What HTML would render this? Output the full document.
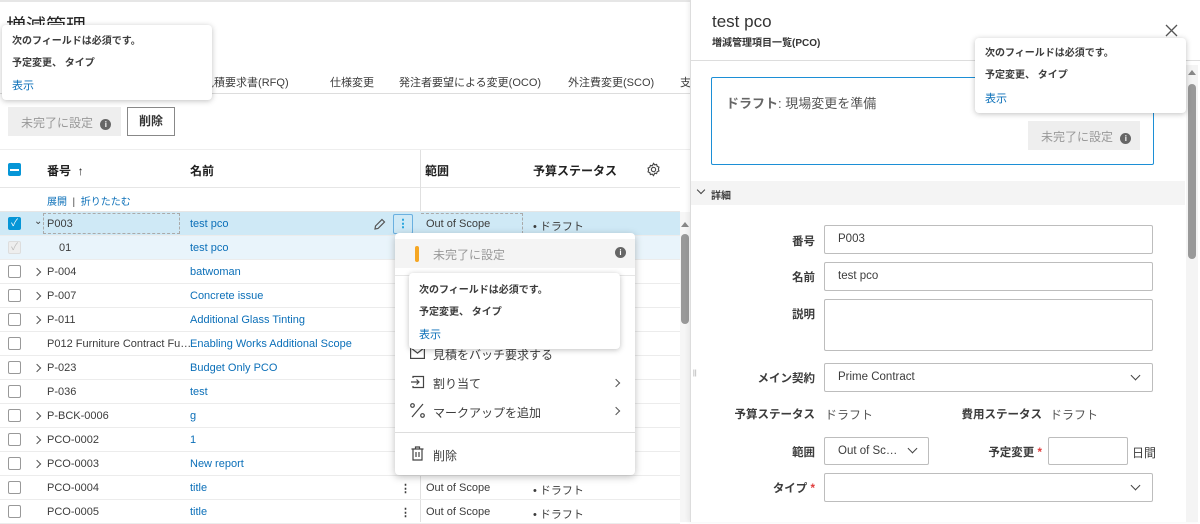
<!DOCTYPE html>
<html><head><meta charset="utf-8"><style>
*{box-sizing:border-box;margin:0;padding:0}
body{width:1200px;height:522px;overflow:hidden;background:#fff;font-family:"Liberation Sans","Noto Sans CJK JP",sans-serif;font-size:11px;color:#3c3c3c;position:relative}
.a{position:absolute;white-space:nowrap}
.row{position:absolute;left:0;width:680px;height:24px;border-bottom:1px solid #ececec}
.row>.a{top:6px}
.cb{position:absolute;left:8px;top:5px;width:13px;height:13px;border:1px solid #999;border-radius:2px;background:#fff}
.lnk{color:#0b6fb8}
.tt{position:absolute;background:#fff;border-radius:4px;box-shadow:0 1px 6px rgba(0,0,0,.25);font-size:10px;font-weight:bold;color:#3c3c3c}
.tt div{position:absolute;left:10px;white-space:nowrap}
.inp{position:absolute;border:1px solid #bdbdbd;background:#fff;border-radius:2px;font-size:11.5px;padding:0 13px;color:#3c3c3c}
.lbl{position:absolute;font-weight:bold;font-size:11.5px;text-align:right;white-space:nowrap}
.chev{position:absolute;width:7px;height:7px;border-right:1.3px solid #444;border-bottom:1.3px solid #444;transform:rotate(45deg)}
.rc{position:absolute;width:6px;height:6px;border-right:1.2px solid #555;border-bottom:1.2px solid #555;transform:rotate(-45deg)}
</style></head><body>
<div class="a" style="left:0;top:0;width:1200px;height:2px;background:#e6e6e6"></div>
<div class="a" style="left:6px;top:10px;font-size:20px;color:#222">増減管理</div>
<div class="a" style="left:200px;top:74px;font-size:11px">/見積要求書(RFQ)</div>
<div class="a" style="left:330px;top:74px;font-size:11px">仕様変更</div>
<div class="a" style="left:399px;top:74px;font-size:11px">発注者要望による変更(OCO)</div>
<div class="a" style="left:568px;top:74px;font-size:11px">外注費変更(SCO)</div>
<div class="a" style="left:680px;top:74px;font-size:11px">支</div>
<div class="a" style="left:0;top:93px;width:690px;height:1px;background:#ddd"></div>
<div class="a" style="left:8px;top:107px;width:113px;height:29px;background:#eee;color:#999;font-size:12px;padding:7px 0 0 13px">未完了に設定 <span style="display:inline-block;width:11px;height:11px;border-radius:50%;background:#666;color:#fff;font-size:8px;text-align:center;line-height:11px;font-weight:bold;margin-left:4px">i</span></div>
<div class="a" style="left:127px;top:107px;width:48px;height:29px;border:1px solid #888;font-weight:bold;font-size:12px;text-align:center;line-height:27px;color:#333">削除</div>
<div class="a" style="left:0;top:149px;width:690px;height:1px;background:#eee"></div>
<div class="a" style="left:8px;top:163px;width:13px;height:13px;background:#0696d7;border-radius:2px"><div style="position:absolute;left:2px;top:6px;width:9px;height:1.5px;background:#fff"></div></div>
<div class="a" style="left:47px;top:162px;font-weight:bold;font-size:12px;color:#222">番号 &nbsp;↑</div>
<div class="a" style="left:190px;top:162px;font-weight:bold;font-size:12px;color:#222">名前</div>
<div class="a" style="left:425px;top:162px;font-weight:bold;font-size:12px;color:#222">範囲</div>
<div class="a" style="left:533px;top:162px;font-weight:bold;font-size:12px;color:#222">予算ステータス</div>
<svg class="a" style="left:646px;top:162px" width="15" height="15" viewBox="0 0 16 16" fill="none" stroke="#444" stroke-width="1.2"><circle cx="8" cy="8" r="2.3"/><path d="M8 1.5l1.3 1.6 2-.5.6 2 1.9.9-.6 2 .6 2-1.9.9-.6 2-2-.5L8 14.5l-1.3-1.6-2 .5-.6-2-1.9-.9.6-2-.6-2 1.9-.9.6-2 2 .5z"/></svg>
<div class="a" style="left:0;top:187px;width:680px;height:1px;background:#e6e6e6"></div>
<div class="a" style="left:420px;top:150px;width:1px;height:372px;background:#e0e0e0"></div>
<div class="a lnk" style="left:47px;top:193px;font-size:10px">展開 <span style="color:#444">&nbsp;|&nbsp;</span> 折りたたむ</div>
<div class="a" style="left:0;top:211px;width:680px;height:1px;background:#e6e6e6"></div>
<div class="row" style="top:212px;background:#cfe9f6">
 <div class="cb" style="background:#0696d7;border-color:#0696d7;color:#fff;font-size:10px;line-height:11px;text-align:center">✓</div>
 <div class="a" style="left:34px;top:4px;font-size:10px">⌄</div>
 <div class="a" style="left:43px;top:1px;width:137px;height:21px;border:1px dashed #aaa"></div>
 <div class="a" style="left:47px">P003</div><div class="a lnk" style="left:190px">test pco</div>
 <svg class="a" style="left:374px;top:6px" width="12" height="12" viewBox="0 0 12 12" fill="none" stroke="#555" stroke-width="1.2"><path d="M8 1.5l2.5 2.5-6.5 6.5-3 .5.5-3z"/></svg>
 <div class="a" style="left:393px;top:2px;width:20px;height:20px;border:1px solid #6ab0e0;border-radius:2px;color:#0696d7;text-align:center;font-weight:bold;line-height:18px">⋮</div>
 <div class="a" style="left:421px;top:1px;width:102px;height:21px;border:1px dashed #aaa;border-left:none"></div>
 <div class="a" style="left:426px">Out of Scope</div><div class="a" style="left:533px">• ドラフト</div>
</div>
<div class="row" style="top:236px;background:#e9f4fb"><div class="cb" style="background:#eee;border-color:#ddd;color:#bbb;font-size:10px;line-height:11px;text-align:center">✓</div><div class="a" style="left:59px">01</div><div class="a lnk" style="left:190px">test pco</div></div>
<div class="row" style="top:260px"><div class="cb"></div><div class="rc" style="left:34px;top:9px"></div><div class="a" style="left:47px">P-004</div><div class="a lnk" style="left:190px">batwoman</div></div>
<div class="row" style="top:284px"><div class="cb"></div><div class="rc" style="left:34px;top:9px"></div><div class="a" style="left:47px">P-007</div><div class="a lnk" style="left:190px">Concrete issue</div></div>
<div class="row" style="top:308px"><div class="cb"></div><div class="rc" style="left:34px;top:9px"></div><div class="a" style="left:47px">P-011</div><div class="a lnk" style="left:190px">Additional Glass Tinting</div></div>
<div class="row" style="top:332px"><div class="cb"></div><div class="a" style="left:47px">P012 Furniture Contract Fu…</div><div class="a lnk" style="left:190px">Enabling Works Additional Scope</div></div>
<div class="row" style="top:356px"><div class="cb"></div><div class="rc" style="left:34px;top:9px"></div><div class="a" style="left:47px">P-023</div><div class="a lnk" style="left:190px">Budget Only PCO</div></div>
<div class="row" style="top:380px"><div class="cb"></div><div class="a" style="left:47px">P-036</div><div class="a lnk" style="left:190px">test</div></div>
<div class="row" style="top:404px"><div class="cb"></div><div class="rc" style="left:34px;top:9px"></div><div class="a" style="left:47px">P-BCK-0006</div><div class="a lnk" style="left:190px">g</div></div>
<div class="row" style="top:428px"><div class="cb"></div><div class="rc" style="left:34px;top:9px"></div><div class="a" style="left:47px">PCO-0002</div><div class="a lnk" style="left:190px">1</div></div>
<div class="row" style="top:452px"><div class="cb"></div><div class="rc" style="left:34px;top:9px"></div><div class="a" style="left:47px">PCO-0003</div><div class="a lnk" style="left:190px">New report</div></div>
<div class="row" style="top:476px"><div class="cb"></div><div class="a" style="left:47px">PCO-0004</div><div class="a lnk" style="left:190px">title</div><div class="a" style="left:400px;font-weight:bold">⋮</div><div class="a" style="left:426px">Out of Scope</div><div class="a" style="left:533px">• ドラフト</div></div>
<div class="row" style="top:500px"><div class="cb"></div><div class="a" style="left:47px">PCO-0005</div><div class="a lnk" style="left:190px">title</div><div class="a" style="left:400px;font-weight:bold">⋮</div><div class="a" style="left:426px">Out of Scope</div><div class="a" style="left:533px">• ドラフト</div></div>
<div class="a" style="left:680px;top:212px;width:10px;height:310px;background:#f6f6f6"></div>
<div class="a" style="left:681px;top:222px;width:0;height:0;border:4px solid transparent;border-bottom:5px solid #888;border-top:none"></div>
<div class="a" style="left:681px;top:234px;width:8px;height:90px;background:#999;border-radius:4px"></div>
<div class="tt" style="left:2px;top:25px;width:210px;height:75px"><div style="top:7px">次のフィールドは必須です。</div><div style="top:29px">予定変更、 タイプ</div><div style="top:52px;font-weight:normal;font-size:11px;color:#0b6fb8">表示</div></div>
<div class="a" style="left:395px;top:233px;width:240px;height:242px;background:#fff;border-radius:4px;box-shadow:0 2px 8px rgba(0,0,0,.25)">
 <div class="a" style="left:0;top:6px;width:240px;height:29px;background:#f4f4f4"></div>
 <div class="a" style="left:20px;top:13px;width:4px;height:16px;background:#f5a623;border-radius:2px"></div>
 <div class="a" style="left:38px;top:13px;font-size:12px;color:#999">未完了に設定</div>
 <div class="a" style="left:220px;top:14px;width:11px;height:11px;border-radius:50%;background:#666;color:#fff;font-size:8px;text-align:center;line-height:11px;font-weight:bold">i</div>
 <div class="a" style="left:0;top:42px;width:240px;height:1px;background:#e6e6e6"></div>
 <svg class="a" style="left:15px;top:114px" width="15" height="12" viewBox="0 0 15 12" fill="none" stroke="#444" stroke-width="1.2"><rect x=".6" y=".6" width="13.8" height="10.8"/><path d="M.6 .6l6.9 5.5 6.9-5.5"/></svg>
 <div class="a" style="left:38px;top:113px;font-size:12px">見積をバッチ要求する</div>
 <svg class="a" style="left:15px;top:142px" width="15" height="14" viewBox="0 0 15 14" fill="none" stroke="#444" stroke-width="1.2"><path d="M3 3V1.5h10.5v11H3V11M1 7h8M6.5 4.5L9 7l-2.5 2.5"/></svg>
 <div class="a" style="left:38px;top:142px;font-size:12px">割り当て</div>
 <div class="rc" style="left:218px;top:147px"></div>
 <svg class="a" style="left:15px;top:170px" width="15" height="15" viewBox="0 0 15 15" fill="none" stroke="#444" stroke-width="1.2"><path d="M13 1L2 14"/><circle cx="2.5" cy="2.5" r="1.8"/><circle cx="12.5" cy="12.5" r="1.8"/></svg>
 <div class="a" style="left:38px;top:171px;font-size:12px">マークアップを追加</div>
 <div class="rc" style="left:218px;top:175px"></div>
 <div class="a" style="left:0;top:199px;width:240px;height:1px;background:#ddd"></div>
 <svg class="a" style="left:16px;top:213px" width="13" height="15" viewBox="0 0 13 15" fill="none" stroke="#444" stroke-width="1.2"><path d="M.5 3h12M4.5 3V1h4v2M2 3v11h9V3M5 6v5M8 6v5"/></svg>
 <div class="a" style="left:38px;top:214px;font-size:12px">削除</div>
</div>
<div class="tt" style="left:409px;top:273px;width:211px;height:76px"><div style="top:8px">次のフィールドは必須です。</div><div style="top:30px">予定変更、 タイプ</div><div style="top:53px;font-weight:normal;font-size:11px;color:#0b6fb8">表示</div></div>
<div class="a" style="left:690px;top:0;width:510px;height:522px;background:#fff;border-left:1px solid #ddd;box-shadow:-2px 0 4px rgba(0,0,0,.06)"></div>
<div class="a" style="left:712px;top:12px;font-size:17px;color:#333">test pco</div>
<div class="a" style="left:712px;top:34px;font-size:10px;font-weight:bold;color:#333">増減管理項目一覧(PCO)</div>
<svg class="a" style="left:1165px;top:24px" width="13" height="13" viewBox="0 0 13 13" stroke="#555" stroke-width="1.3"><path d="M1 1l11 11M12 1L1 12"/></svg>
<div class="a" style="left:691px;top:60px;width:509px;height:1px;background:#ddd"></div>
<div class="a" style="left:1186px;top:65px;width:12px;height:457px;background:#f4f4f4"></div>
<div class="a" style="left:1188px;top:70px;width:0;height:0;border:4px solid transparent;border-bottom:5px solid #888;border-top:none"></div>
<div class="a" style="left:1188px;top:84px;width:8px;height:175px;background:#999;border-radius:4px"></div>
<div class="a" style="left:711px;top:77px;width:443px;height:88px;border:1px solid #1c8fd6;border-radius:2px"></div>
<div class="a" style="left:726px;top:93px;font-size:13px;color:#555"><b style="color:#666;font-weight:bold">ドラフト</b>: 現場変更を準備</div>
<div class="a" style="left:1028px;top:121px;width:112px;height:29px;background:#eee;color:#999;font-size:12px;padding:7px 0 0 13px">未完了に設定 <span style="display:inline-block;width:11px;height:11px;border-radius:50%;background:#666;color:#fff;font-size:8px;text-align:center;line-height:11px;font-weight:bold;margin-left:4px">i</span></div>
<div class="tt" style="left:975px;top:38px;width:211px;height:75px"><div style="top:6px">次のフィールドは必須です。</div><div style="top:28px">予定変更、 タイプ</div><div style="top:52px;font-weight:normal;font-size:11px;color:#0b6fb8">表示</div></div>
<div class="a" style="left:691px;top:181px;width:494px;height:24px;background:#f4f4f4"></div>
<div class="chev" style="left:698px;top:187px;width:6px;height:6px"></div>
<div class="a" style="left:711px;top:187px;font-size:10px;font-weight:bold">詳細</div>
<div class="lbl" style="left:700px;width:115px;top:233px">番号</div>
<div class="inp" style="left:824px;top:225px;width:329px;height:29px;line-height:27px">P003</div>
<div class="lbl" style="left:700px;width:115px;top:269px">名前</div>
<div class="inp" style="left:824px;top:262px;width:329px;height:29px;line-height:27px">test pco</div>
<div class="lbl" style="left:700px;width:115px;top:306px">説明</div>
<div class="inp" style="left:824px;top:299px;width:329px;height:52px"></div>
<div class="lbl" style="left:700px;width:115px;top:370px">メイン契約</div>
<div class="inp" style="left:824px;top:363px;width:329px;height:29px;line-height:27px">Prime Contract</div>
<div class="chev" style="left:1132px;top:372px"></div>
<div class="lbl" style="left:700px;width:115px;top:406px">予算ステータス</div>
<div class="a" style="left:825px;top:406px;font-size:12px;color:#555">ドラフト</div>
<div class="lbl" style="left:920px;width:122px;top:406px">費用ステータス</div>
<div class="a" style="left:1050px;top:406px;font-size:12px;color:#555">ドラフト</div>
<div class="lbl" style="left:700px;width:115px;top:444px">範囲</div>
<div class="inp" style="left:824px;top:437px;width:105px;height:28px;line-height:26px">Out of Sc…</div>
<div class="chev" style="left:909px;top:445px"></div>
<div class="lbl" style="left:920px;width:122px;top:444px">予定変更 <span style="color:#e03c3c">*</span></div>
<div class="inp" style="left:1048px;top:437px;width:80px;height:28px"></div>
<div class="a" style="left:1132px;top:444px;font-size:12px">日間</div>
<div class="lbl" style="left:700px;width:115px;top:480px">タイプ <span style="color:#e03c3c">*</span></div>
<div class="inp" style="left:824px;top:473px;width:329px;height:29px"></div>
<div class="chev" style="left:1132px;top:482px"></div>
<div class="a" style="left:693px;top:370px;font-size:7px;color:#999">||</div>
</body></html>
